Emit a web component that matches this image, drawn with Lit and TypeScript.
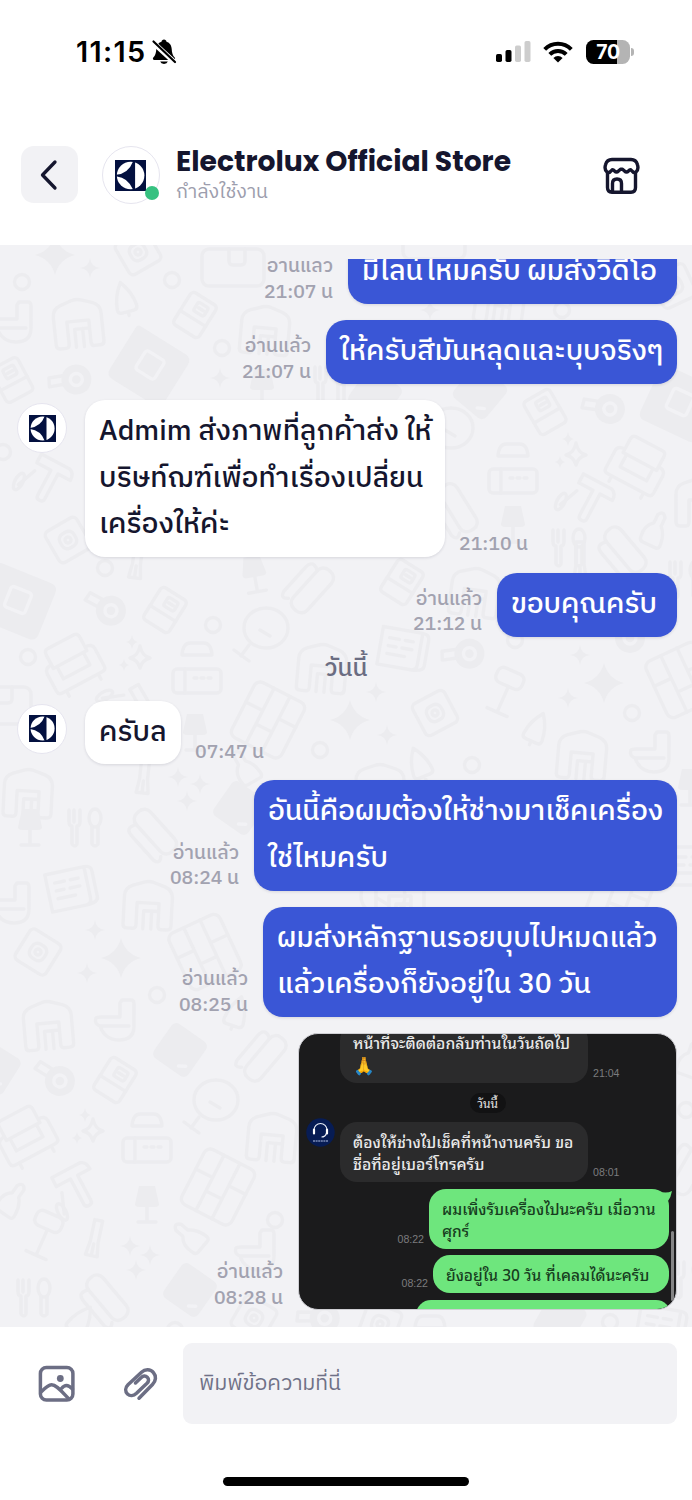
import { LitElement, html, css, svg, nothing } from 'lit';

type Msg = {
  mine?: boolean;
  lines: string[];
  time: string;
  width: number;
};

const before: Msg[] = [
  { mine: true, lines: ['มีไลน์ไหมครับ ผมส่งวิดีโอ'], time: '21:07 น', width: 329 },
  { mine: true, lines: ['ให้ครับสีมันหลุดและบุบจริงๆ'], time: '21:07 น', width: 351 },
  { lines: ['Admim ส่งภาพที่ลูกค้าส่ง ให้', 'บริษท์ฌฑ์เพื่อทำเรื่องเปลี่ยน', 'เครื่องให้ค่ะ'], time: '21:10 น', width: 360 },
  { mine: true, lines: ['ขอบคุณครับ'], time: '21:12 น', width: 180 },
];
const today: Msg[] = [
  { lines: ['ครับล'], time: '07:47 น', width: 96 },
  { mine: true, lines: ['อันนี้คือผมต้องให้ช่างมาเช็คเครื่อง', 'ใช่ไหมครับ'], time: '08:24 น', width: 423 },
  { mine: true, lines: ['ผมส่งหลักฐานรอยบุบไปหมดแล้ว', 'แล้วเครื่องก็ยังอยู่ใน 30 วัน'], time: '08:25 น', width: 414 },
];

const logo = (size: number) => html`<svg width=${size} height=${size} viewBox="0 0 27 27">
  <rect width="27" height="27" fill="#03103f"/>
  <circle cx="13.6" cy="13.5" r="12" fill="#fff"/>
  <path d="M1 12.900Q11.800 11.600 15.800 1V0h1.700v27h-1.700v-1Q11.800 15.400 1 14.100Z" fill="#03103f"/>
</svg>`;

/* Doodle shapes, each centred on its own origin */
const shapes: Record<string, unknown> = {
  arch: svg`<path d="M-24 20V-8Q-24-16-16-19L-4-23Q0-24 4-23L16-19Q24-16 24-8V20Q24 24 20 24H14Q11 24 11 20V-2H-11V20Q-11 24-14 24H-20Q-24 24-24 20ZM-4 24V6M4 24V6M-4 6H11"/>`,
  bowl: svg`<path class="f" d="M-28-28Q-32-28-32-24V24Q-32 32-24 32H24Q32 32 32 24V-20Q32-28 24-28Z"/><rect class="h" x="-11" y="-11" width="22" height="22" rx="3"/>`,
  plate: svg`<rect class="f" x="-21" y="-21" width="42" height="42" rx="6"/><path class="h" d="M8 14l6-4"/>`,
  fridge: svg`<rect x="-15" y="-19" width="30" height="38" rx="4"/><path d="M-15 4H15"/><rect x="-4" y="-13" width="12" height="10" rx="2"/><path d="M-1-8H5"/>`,
  ring: svg`<circle r="7.5"/>`,
  star: svg`<path class="f" d="M0-10Q1-1 10 0Q1 1 0 10Q-1 1-10 0Q-1-1 0-10Z"/>`,
  big: svg`<path class="f" d="M0-20Q4-4 20 0Q4 4 0 20Q-4 4-20 0Q-4-4 0-20Z"/>`,
  sparks: svg`<path d="M3-9Q5 1 13 3Q5 5 3 13Q1 5-7 3Q1 1 3-9Z"/><path class="f" d="M-5-20q1 6 6 7q-5 1-6 7q-1-6-6-7q5-1 6-7ZM-13 4q1 5 5 6q-4 1-5 6q-1-5-5-6q4-1 5-6Z"/>`,
  cone: svg`<path d="M0-18Q9-6 10 8Q10 12 6 12H-6Q-10 12-10 8Q-9-6 0-18ZM0 12v4"/>`,
  toilet: svg`<path d="M7-20H16Q19-20 19-16V6Q19 20 4 20Q-10 20-15 6Q-21 4-19-2Q-18-3-14-3H5V-17ZM-15 6H14"/>`,
  tape: svg`<circle class="f" cx="5" r="15"/><circle class="h" cx="5" r="6"/><path d="M-8-2L-22-7L-18-15L-2-9"/>`,
  box: svg`<rect x="-18" y="-18" width="36" height="36" rx="5"/><rect x="-8" y="-8" width="16" height="16" rx="6"/><circle r="3"/>`,
  bag: svg`<rect x="-31" y="-18" width="62" height="37" rx="7"/><path d="M-4-18V-6Q-4-2 0-2H8Q12-2 12-6V-18"/>`,
  hammer: svg`<path d="M-18-20L14-20Q20-18 20-10H6V18Q6 22 2 22Q-2 22-2 18V-10H-18ZM-24 18L-16-2"/><ellipse cx="-25" cy="15" rx="4" ry="9"/>`,
  chair: svg`<path d="M-15-24H15Q19-24 19-19V-4H-19V-19Q-19-24-15-24ZM-19-8Q-27-8-27-2V18Q-27 22-22 22H22Q27 22 27 18V-2Q27-8 19-8M-15 10V-4M15 10V-4M-15 10H15M-18 22V28M18 22V28"/>`,
  cap: svg`<path d="M-15 6Q-14-6-7-6H7Q14-6 15 6Z"/>`,
  card: svg`<rect x="-24" y="-12" width="48" height="24" rx="4"/><path d="M-12-12V12"/><path stroke-dasharray="3 4" d="M-3-3H17"/>`,
  mirror: svg`<ellipse cx="3" cy="-4" rx="22" ry="20"/><path d="M-3-2L7 4M-14 13L-22 24M-29 18L-14 29"/>`,
  grid: svg`<rect x="-28" y="-31" width="56" height="62" rx="7"/><path d="M-9-31V31M9-31V31M-28-6H-9M-9 9H9M9-6H28"/>`,
  lamp: svg`<path class="f" d="M-8-16H8L12 2Q12 5 8 5H-8Q-12 5-12 2Z"/><path d="M0 5V20M-9 20H9"/>`,
  desk: svg`<rect x="-16" y="-22" width="28" height="16" rx="6"/><path d="M0-6V22M-11 22H11"/>`,
  fork: svg`<path d="M-15-18V-6Q-15-2-12-2V16Q-9 20-7 16V-2Q-4-2-4-6V-18M-10-18V-6"/><ellipse cx="11" cy="-10" rx="6" ry="9"/><path d="M8-2V16Q11 20 14 16V-2"/>`,
  knife: svg`<path d="M-4-18H4V4L6 18H-6L-4 4ZM0 6V18"/>`,
  stick: svg`<rect x="-9" y="-26" width="19" height="52" rx="8"/><path d="M-9-18Q-20-24-20-12V20Q-18 28-12 22"/>`,
  bottle: svg`<path d="M-4-6Q-12 0-10 12Q-10 16-6 16H8Q12 16 11 10Q10 0 4-6V-15Q0-22-4-15Z"/>`,
  plan: svg`<path d="M-22-18H18V14Q18 20 12 20H-22ZM18-18Q25-18 25-12V14Q25 20 12 20M-14-8H-4M2-8H10M-14 0H-6M0 0H10M-14 8H4"/>`,
};

type Doodle = [string, number, number, number?];
const doodles: Doodle[] = [
  ['big',55,255],['star',90,268],['box',138,252,-30],['bag',233,267],['ring',22,282],['ring',172,280],['ring',222,348],
  ['cone',125,300,-15],['toilet',12,322],['arch',78,323,-6],['fridge',195,315,32],['arch',265,330,5],['bowl',150,365,32],
  ['fridge',12,380,-28],['tape',72,382,-30],['star',220,378],['hammer',48,480,28],['box',68,540,-30],['ring',3,452],
  ['lamp',262,385],['fork',330,385],
  ['bowl',18,600,22],['ring',105,568],['knife',137,560,8],['lamp',254,572,-10],['tape',106,610,8],['fridge',165,610,32],
  ['ring',213,625],['mirror',263,632],['arch',322,668,5],['chair',72,663,-28],['sparks',137,655],['ring',28,657],
  ['cap',197,649],['card',197,681],['bag',0,705],['grid',268,720,27],['arch',28,793,3],['hammer',130,710,60],['lamp',195,730],
  ['ring',320,750],['knife',144,775,6],['star',178,777],['star',200,784],['star',187,801],['plate',240,808,35],
  ['lamp',30,825],['fork',84,828],['stick',155,832,-42],['plan',70,888,-12],['toilet',10,903],['arch',148,905,3],
  ['bottle',245,768,-30],['stick',312,590,42],
  ['box',38,952,32],['star',95,930],['big',121,958],['star',87,973],['grid',205,952,-25],['ring',157,995],
  ['arch',48,1025,-5],['toilet',115,1020],['plate',180,1050,35],['cone',236,1014,18],['stick',265,1058,40],['plate',-6,1068,32],
  ['tape',55,1080,12],['fridge',115,1080,32],['chair',25,1135,-28],['sparks',90,1128],['mirror',213,1104],
  ['cap',147,1120],['card',147,1150],['arch',272,1137,5],['hammer',77,1187,-28],['bottle',12,1200,35],['lamp',147,1202],
  ['grid',218,1187,27],['desk',45,1235,24],['knife',95,1238,12],['bottle',190,1237,-50],['star',130,1246],['star',150,1255],
  ['star',136,1270],['fork',33,1298],['stick',107,1298,-40],['plate',190,1290,35],['ring',275,1220],['toilet',255,1250],
  ['box',254,1318,30],['ring',175,1330],['cone',80,1322,35],
  ['bag',434,240],['box',674,286,-25],['arch',500,300,8],['ring',562,310],['star',430,310],['plate',480,392,40],['plate',375,395,35],
  ['fridge',545,412,-30],['tape',605,410,-12],['bowl',680,402,25],['chair',638,465,28],['sparks',573,452],
  ['cap',513,450],['card',513,481],['mirror',448,432],['stick',458,508,-32],['hammer',590,500,28],['bottle',655,530,25],
  ['lamp',513,522],['fork',568,548],['arch',700,502],['stick',625,550,-40],
  ['fridge',402,582,32],['arch',475,592,8],['plan',402,648,10],['ring',515,640],['tape',465,656,-28],['desk',506,692,24],
  ['star',580,655],['big',604,683],['star',568,698],['box',435,713,-28],['ring',632,713],['grid',682,680,-25],
  ['cone',536,730,24],['arch',582,755,5],['toilet',650,752],['star',376,692],['big',350,720],['star',387,735],
  ['cone',420,765,-22],['ring',472,765],['arch',380,788],['tape',625,638],['knife',580,560],['fork',685,580],
  ['plan',690,865],['lamp',690,785],['bottle',690,1060,20],['ring',686,1110],['stick',690,1170,30],['fork',688,1280],
  ['tape',320,1320,-20],['cap',430,1322],['box',380,1324,20],['plate',560,1320,30],['ring',610,1322],['plan',660,1326,10],
  ['mirror',380,900],['arch',400,898],['grid',620,897,20],
];

const prayer = '🙏';

class AppRoot extends LitElement {
  static styles = css`
    :host { display: block; }
    * { box-sizing: border-box; }
    svg { display: block; flex: none; }
    .page {
      width: 692px; height: 1500px; display: flex; flex-direction: column; background: #fff; overflow: hidden;
      font-family: 'IBM Plex Sans Thai', 'Noto Sans', sans-serif; color: #15162e;
    }
    .status { height: 103px; padding: 0 58px 0 76px; display: flex; align-items: center; color: #000; font-family: Inter, sans-serif; }
    .clock { font-size: 28.8px; font-weight: 600; letter-spacing: 1.3px; width: 75px; white-space: nowrap; }
    .wifi { margin-left: 12px; }
    .fill { flex: 1; }
    .battery { margin-left: 13px; display: flex; align-items: center; gap: 1px; }
    .cell {
      width: 44px; height: 24px; border-radius: 7.5px; display: grid; place-items: center; color: #fff;
      background: linear-gradient(90deg, #000 31px, #b4b4b4 31px); font: 700 19.5px Inter, sans-serif; letter-spacing: -.4px;
    }
    .nub { width: 3px; height: 8px; border-radius: 0 3px 3px 0; background: #b4b4b4; }
    .header { height: 142px; padding: 43px 52px 0 21px; display: flex; align-items: flex-start; }
    .back { width: 57px; height: 57px; border-radius: 13px; background: #f2f2f5; display: grid; place-items: center; }
    .avatar { width: 50px; height: 50px; border: 1.5px solid #e6e5ef; border-radius: 50%; background: #fff; display: grid; place-items: center; flex: none; }
    .avatar.lg { position: relative; width: 58px; height: 58px; margin-left: 23.5px; }
    .dot { position: absolute; right: 0; bottom: 3px; width: 14px; height: 14px; border-radius: 50%; background: #36c180; }
    .who { margin-left: 16.5px; display: flex; flex-direction: column; }
    .name { font: 700 28.2px/30px Poppins, Inter, sans-serif; white-space: nowrap; margin-top: -.5px; }
    .state { font-size: 19.6px; line-height: 30px; padding-top: 1px; color: #9c9dad; }
    .shop { margin-top: 11px; }
    .chat { position: relative; height: 1082px; background: #f2f2f5; padding-top: 14px; overflow: hidden; }
    .pattern { position: absolute; left: 0; top: 0; fill: none; stroke: #ececef; stroke-width: 3.4; stroke-linejoin: round; stroke-linecap: round; }
    .pattern .f { fill: #ececef; stroke: none; }
    .pattern .h { fill: none; stroke: #f2f2f5; }
    .list { position: relative; height: 1068px; overflow: hidden; padding: 0 15px 17px 17px; display: flex; flex-direction: column; justify-content: flex-end; gap: 16px; }
    .row { display: flex; align-items: flex-end; gap: 15px; flex: none; }
    .row.mine { justify-content: flex-end; }
    .row .avatar { align-self: flex-start; margin: 3px 3px 0 0; }
    .bubble {
      padding: 9px 0 8.3px 14px; border-radius: 20px; background: #fff; font-size: 28.2px; font-weight: 500; line-height: 46.5px;
      white-space: nowrap; box-shadow: 0 1px 3px rgba(20, 20, 50, .12);
    }
    .mine .bubble { background: #3a56d6; color: #fff; }
    .meta { font-size: 19.4px; line-height: 25.5px; font-weight: 500; color: #a2a2b0; text-align: right; white-space: nowrap; margin-bottom: -1.2px; }
    .row:not(.mine) .meta { margin: 0 0 -.8px -1px; }
    .day { text-align: center; margin-right: 2px; font-size: 24.4px; line-height: 32px; color: #6b6d82; font-weight: 500; }
    .shot {
      position: relative; width: 379px; height: 277px; border-radius: 20px; background: #1b1b1c; overflow: hidden;
      display: flex; flex-direction: column; font-family: 'Noto Sans Thai Looped', Loma, sans-serif; border: 1px solid #cfcfd4; color: #e9e9e9;
    }
    .line { display: flex; align-items: flex-end; gap: 5px; padding-left: 41px; flex: none; }
    .line.me { padding: 0 7px 0 0; justify-content: flex-end; }
    .line.top { margin-top: -11px; }
    .line.first { margin-top: 7px; }
    .line.second { margin: 6px 0 7px; }
    .say { position: relative; width: 248px; border-radius: 17px; background: #2b2b2c; padding: 8px 0 8px 13px; font-size: 15.7px; line-height: 22px; white-space: nowrap; font-weight: 500; }
    .me .say { background: #6ee67d; color: #173d20; font-size: 15.5px; }
    .first .say { width: 240px; }
    .second .say { width: 236px; }
    .emoji { font-size: 17.5px; }
    .tail { position: absolute; right: -3px; top: 2px; }
    .at { font: 10.6px/20px 'Liberation Sans', sans-serif; color: #7b7b7e; }
    .pill { align-self: center; width: 36px; height: 20px; border-radius: 10px; background: #121213; font-size: 12px; line-height: 20px; text-align: center; margin: 10px 0 9px; }
    .line.agent { padding-left: 7px; }
    .agent .face { align-self: flex-start; margin-top: -4px; }
    .cut { align-self: flex-end; width: 255px; height: 30px; margin-right: 5px; border-radius: 17px; background: #6ee67d; flex: none; }
    .scroll { position: absolute; right: 2px; top: 197px; width: 3px; height: 70px; border-radius: 2px; background: #858586; }
    .composer { flex: 1; padding: 16px 15px 0 38px; display: flex; flex-direction: column; align-items: stretch; }
    .tools { display: flex; align-items: center; height: 81px; }
    .clip { margin-left: 47px; }
    .input { margin-left: auto; width: 494px; height: 81px; border-radius: 9px; background: #f2f2f5; padding: 23.5px 16px; font-size: 21.4px; line-height: 34px; color: #6f7187; }
    .home { width: 246px; height: 9px; border-radius: 5px; background: #000; margin: 53px 0 0 185px; }
  `;

  row(m: Msg) {
    const bubble = html`<div class="bubble" style="width:${m.width}px">${m.lines.map((l) => html`<div>${l}</div>`)}</div>`;
    return m.mine
      ? html`<div class="row mine"><div class="meta"><div>อ่านแล้ว</div><div>${m.time}</div></div>${bubble}</div>`
      : html`<div class="row"><div class="avatar">${logo(27)}</div>${bubble}<div class="meta">${m.time}</div></div>`;
  }

  shot() {
    return html`<div class="shot">
      <div class="line top"><div class="say"><div>หน้าที่จะติดต่อกลับท่านในวันถัดไป</div><div class="emoji">${prayer}</div></div><span class="at">21:04</span></div>
      <div class="pill">วันนี้</div>
      <div class="line agent">
        <svg class="face" width="29" height="29" viewBox="0 0 29 29"><circle cx="14.5" cy="14.5" r="14.2" fill="#071c54"/><path d="M8 14v-2a6.500 6.500 0 0 1 13 0v2M20.500 15q-1 4-5 4" fill="none" stroke="#e8edf7" stroke-width="1.100"/><path d="M8 11.500v4M21 11.500v4" stroke="#fff" stroke-width="2.200" stroke-linecap="round"/><path d="M7 23h15" stroke="#7d8db8" stroke-width="1.300" stroke-dasharray="2 .6"/></svg>
        <div class="say"><div>ต้องให้ช่างไปเช็คที่หน้างานครับ ขอ</div><div>ชื่อที่อยู่เบอร์โทรครับ</div></div><span class="at">08:01</span>
      </div>
      <div class="line me first"><span class="at">08:22</span><div class="say"><div>ผมเพิ่งรับเครื่องไปนะครับ เมื่อวาน</div><div>ศุกร์</div><svg class="tail" width="14" height="12" viewBox="0 0 14 12"><path d="M0 0Q8 3 14 0Q13 6 10 10Z" fill="#6ee67d"/></svg></div></div>
      <div class="line me second"><span class="at">08:22</span><div class="say">ยังอยู่ใน 30 วัน ที่เคลมได้นะครับ</div></div>
      <div class="cut"></div>
      <div class="scroll"></div>
    </div>`;
  }

  render() {
    return html`<div class="page">
      <div class="status">
        <div class="clock">11:15</div>
        <svg width="26" height="28" viewBox="0 0 26 28"><path d="M13 1.500c1.500 0 2.300 1 2.500 2.200 3.500 1 5 4 5.200 7.300.2 4 1 6.500 3 8.500.8.900.4 2.500-1 2.500H3.300c-1.400 0-1.800-1.600-1-2.500 2-2 2.800-4.500 3-8.500.2-3.300 1.700-6.300 5.200-7.300C10.700 2.500 11.500 1.500 13 1.500Z"/><path d="M9.200 23.500h7.600a3.900 3.200 0 0 1-7.600 0Z"/><path d="M1.500 4L25 25.500" stroke="#fff" stroke-width="5.200"/><path d="M2.500 3.500L24 24" stroke="#000" stroke-width="2.200" stroke-linecap="round"/></svg>
        <div class="fill"></div>
        <svg width="35" height="21" viewBox="0 0 35 21"><rect y="13" width="6" height="8" rx="1.700"/><rect x="9.500" y="9" width="6" height="12" rx="1.700"/><g fill="#cdcdcd"><rect x="19" y="4.500" width="6" height="16.500" rx="1.700"/><rect x="28.500" width="6" height="21" rx="1.700"/></g></svg>
        <svg class="wifi" width="30" height="22" viewBox="0 0 30 22"><g fill="none" stroke="#000" stroke-width="4"><path d="M1.700 8.300a18.800 18.800 0 0 1 26.600 0"/><path d="M6.800 13.400a11.600 11.600 0 0 1 16.400 0"/></g><path d="M15 21.500l-4.600-4.600a6.500 6.500 0 0 1 9.200 0Z"/></svg>
        <div class="battery"><div class="cell">70</div><div class="nub"></div></div>
      </div>
      <div class="header">
        <div class="back"><svg width="20" height="32" viewBox="0 0 20 32"><path d="M15 3L2.500 16L15 29" fill="none" stroke="#15162e" stroke-width="3.300" stroke-linecap="round" stroke-linejoin="round"/></svg></div>
        <div class="avatar lg">${logo(31)}<span class="dot"></span></div>
        <div class="who"><div class="name">Electrolux Official Store</div><div class="state">กำลังใช้งาน</div></div>
        <div class="fill"></div>
        <svg class="shop" width="37" height="38" viewBox="0 0 37 38" fill="none" stroke="#15162e" stroke-width="3.400" stroke-linecap="round" stroke-linejoin="round"><path d="M4 15Q1 12.500 2.600 7.500Q4 2.500 9 2.500H28Q33 2.500 34.400 7.500Q36 12.500 33 15Q30.500 16.300 28.500 13.500L27.500 12.700Q26.500 12.700 25.500 14Q23.500 16 21.500 14L19.500 12.300H17.500L15.500 14Q13.500 16 11.500 14Q10.500 12.700 9.500 12.700L8.500 13.500Q6.500 16.300 4 15Z"/><path d="M4.500 15.500V30.500Q4.500 35.200 9 35.200H28Q32.500 35.200 32.500 30.500V15.500M9.500 35V26.500Q9.500 22 14 22Q18.500 22 18.500 26.500V35"/></svg>
      </div>
      <div class="chat">
        <svg class="pattern" width="692" height="1082" viewBox="0 245 692 1082">${doodles.map(([k, x, y, r]) => svg`<g transform="translate(${x} ${y}) rotate(${r ?? 0})">${shapes[k] ?? nothing}</g>`)}</svg>
        <div class="list">
          ${before.map((m) => this.row(m))}
          <div class="day">วันนี้</div>
          ${today.map((m) => this.row(m))}
          <div class="row mine"><div class="meta"><div>อ่านแล้ว</div><div>08:28 น</div></div>${this.shot()}</div>
        </div>
      </div>
      <div class="composer">
        <div class="tools">
          <svg width="37" height="37" viewBox="0 0 37 37" fill="none" stroke="#6c6e84" stroke-width="3.500" stroke-linecap="round" stroke-linejoin="round"><rect x="2.400" y="2.400" width="32.500" height="32.500" rx="6"/><path d="M3 27C8 22 10.500 19.800 13.500 19.800C18.500 19.800 24 27 31 34M23.500 23.500Q26 20.500 28.500 20.500Q31 20.500 34.500 24"/><circle cx="22.300" cy="13.500" r="3.400" fill="#6c6e84" stroke="none"/></svg>
          <svg class="clip" width="36" height="36" viewBox="0 0 36 36" fill="none" stroke="#6c6e84" stroke-width="3.500" stroke-linecap="round" stroke-linejoin="round"><path d="M17 32.200L30.500 18.500C34 15 34.500 10 31.500 6.700C28.500 3 23 3 19.500 6.200L6 18.800C3 21.800 3 25.500 5.500 28C8 30.300 11.500 30 14.500 27.300L25 17.300C27 15.300 27 12.800 25.300 11.200C23.500 9.500 21 9.800 19.300 11.500L13.500 17"/></svg>
          <div class="input">พิมพ์ข้อความที่นี่</div>
        </div>
        <div class="home"></div>
      </div>
    </div>`;
  }
}
customElements.define('app-root', AppRoot);
